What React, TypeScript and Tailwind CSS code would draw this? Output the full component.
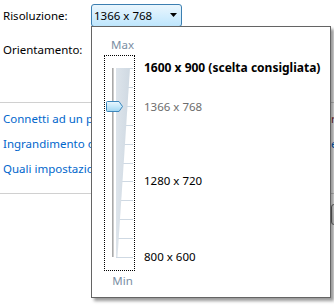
import React from "react";

const FONT = { fontFamily: '"Segoe UI", "Noto Sans", sans-serif' };

function SliderArt() {
  const ticks = [12, 31, 50, 69, 88, 107, 125, 144, 163, 182, 201];
  return (
    <svg width="29" height="214" viewBox="0 0 29 214">
      <defs>
        <linearGradient id="wedge" x1="0" y1="0" x2="1" y2="0">
          <stop offset="0" stopColor="#dde4eb" />
          <stop offset="1" stopColor="#cfd9e2" />
        </linearGradient>
        <linearGradient id="thumb" x1="0" y1="0" x2="0" y2="1">
          <stop offset="0" stopColor="#eaf7fd" />
          <stop offset="0.5" stopColor="#c6e9fa" />
          <stop offset="1" stopColor="#9fd6f2" />
        </linearGradient>
      </defs>
      {ticks.map((y) => (
        <line key={y} x1="11" y1={y + 0.5} x2="28" y2={y + 0.5} stroke="#cfd9e3" strokeWidth="1" />
      ))}
      <polygon points="11,12 25,12 12.5,201 11,201" fill="url(#wedge)" />
      <rect x="7" y="12" width="1.6" height="189" fill="#a9a9a9" />
      <path
        d="M2.5 45.5 H14 L17.5 50.5 L14 55.5 H2.5 Q1.5 55.5 1.5 54.5 V46.5 Q1.5 45.5 2.5 45.5 Z"
        fill="url(#thumb)"
        stroke="#3c87bd"
        strokeWidth="1"
      />
    </svg>
  );
}

export default function App() {
  return (
    <div className="relative w-[334px] h-[308px] overflow-hidden bg-white text-[11.5px] text-black" style={FONT}>
      {/* background page */}
      <div className="flex flex-col">
        <div className="flex items-center h-[29px] pt-[1px]">
          <span className="w-[91px] pl-[3px] leading-[15px]">Risoluzione:</span>
          <div className="flex items-center justify-between w-[91px] h-[23px] rounded-[3px] border border-[#3c7fb1] bg-gradient-to-b from-[#eaf6fd] to-[#bee6fd] pl-[2px] pr-[4px]">
            <span className="leading-[15px]">1366 x 768</span>
            <svg width="7" height="4" viewBox="0 0 7 4">
              <polygon points="0,0 7,0 3.5,4" fill="#000" />
            </svg>
          </div>
        </div>
        <div className="flex items-center h-[15px] mt-[13px]">
          <span className="pl-[3px] leading-[15px]">Orientamento:</span>
        </div>
        <div className="h-px bg-[#d0d0d0] mt-[45px]" />
        <div className="flex flex-col mt-[8px] gap-[10px] text-[#0066cc]">
          <div className="flex leading-[15px] whitespace-nowrap">
            <span className="w-[91px] pl-[3px] overflow-hidden shrink-0">Connetti ad un pr</span>
            <span className="ml-[240px] text-[#7a2a3a]">r</span>
          </div>
          <div className="flex leading-[15px] whitespace-nowrap">
            <span className="w-[91px] pl-[3px] overflow-hidden shrink-0">Ingrandimento o</span>
            <span className="ml-[240px]">e</span>
          </div>
          <div className="flex leading-[15px] whitespace-nowrap">
            <span className="w-[91px] pl-[3px] overflow-hidden shrink-0">Quali impostazio</span>
          </div>
        </div>
        <div className="h-px bg-[#d0d0d0] mt-[17px]" />
        <div className="flex pl-[331px] mt-[10px]">
          <div className="w-[75px] h-[21px] shrink-0 rounded-[3px] border border-[#707070] bg-gradient-to-b from-[#f2f2f2] to-[#dcdcdc]" />
        </div>
      </div>

      {/* dropdown */}
      <div className="absolute left-[91px] top-[26px] w-[240px] h-[272px] border border-[#646464] bg-white shadow-[3px_3px_3px_rgba(0,0,0,0.4)] flex">
        <div className="flex flex-col w-[52px] pl-[12px]">
          <div className="mt-[10px] leading-[15px] text-[#7a8ea3] w-[31px] text-center pl-[6px]">Max</div>
          <div className="mt-[3px] w-[31px] h-[216px] border border-dotted border-black">
            <SliderArt />
          </div>
          <div className="mt-[2px] leading-[15px] text-[#7a8ea3] w-[31px] text-center pl-[6px]">Min</div>
        </div>
        <div className="flex flex-col">
          <div className="mt-[33px] leading-[15px] text-[12px] font-bold whitespace-nowrap">1600 x 900 (scelta consigliata)</div>
          <div className="mt-[24px] leading-[15px] text-[#6d6d6d]">1366 x 768</div>
          <div className="mt-[59px] leading-[15px]">1280 x 720</div>
          <div className="mt-[61px] leading-[15px]">800 x 600</div>
        </div>
      </div>
    </div>
  );
}
